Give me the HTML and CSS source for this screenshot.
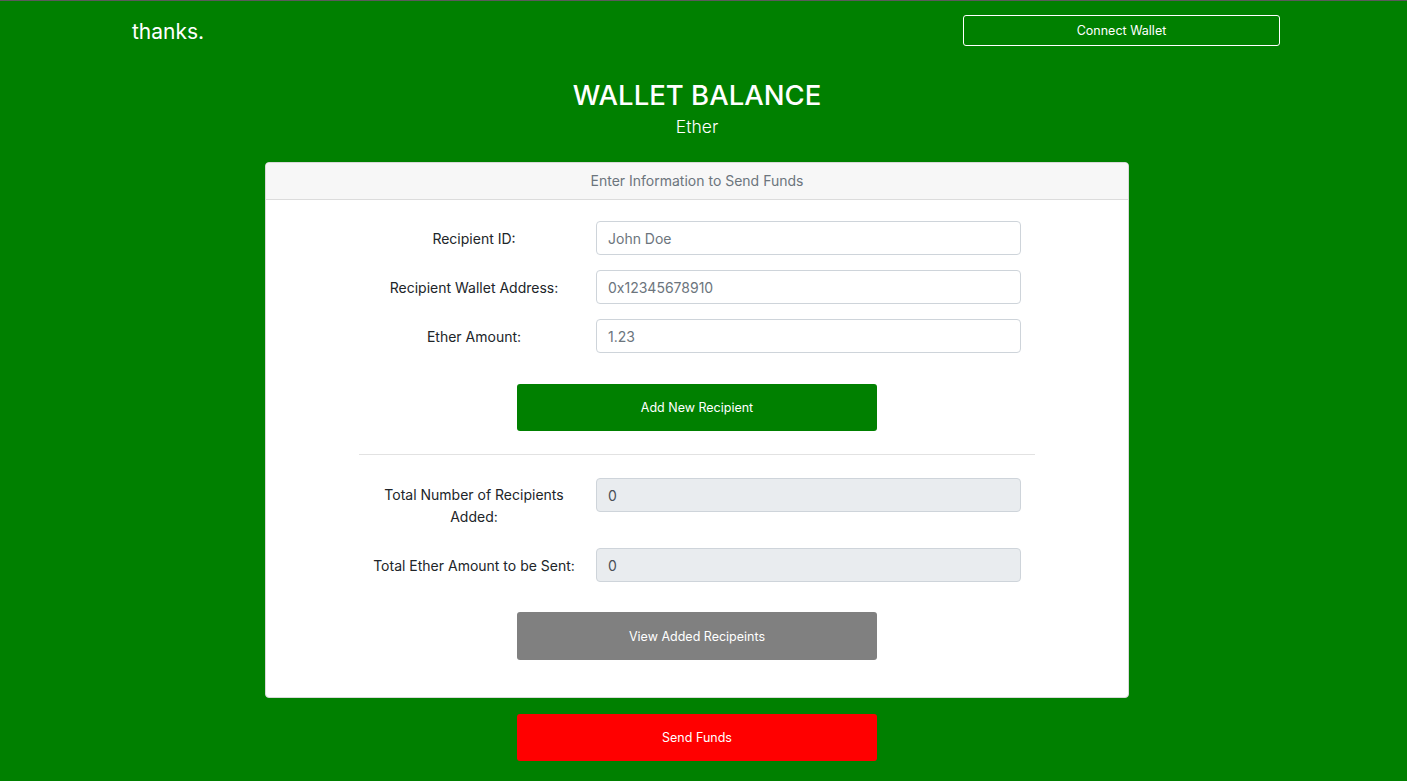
FILE: index.html
```html
<!DOCTYPE html>
<html>
<head>
<meta charset="utf-8">
<link rel="stylesheet" href="styles.css">
</head>
<body>
<div class="topline"></div>
<nav class="navbar">
  <span class="brand">thanks.</span>
  <button class="btn-outline">Connect Wallet</button>
</nav>
<main class="page">
  <header class="hero">
    <h1 class="title">WALLET BALANCE</h1>
    <p class="lead">Ether</p>
  </header>
  <section class="card">
    <div class="card-header">Enter Information to Send Funds</div>
    <div class="card-body">
      <div class="inner">
        <div class="row">
          <label class="label">Recipient ID:</label>
          <input class="field" placeholder="John Doe">
        </div>
        <div class="row">
          <label class="label">Recipient Wallet Address:</label>
          <input class="field" placeholder="0x12345678910">
        </div>
        <div class="row">
          <label class="label">Ether Amount:</label>
          <input class="field" placeholder="1.23">
        </div>
        <div class="btn-wrap first">
          <button class="btn btn-green">Add New Recipient</button>
        </div>
        <hr class="divider">
        <div class="row tall">
          <label class="label">Total Number of Recipients Added:</label>
          <input class="field readonly" value="0" readonly>
        </div>
        <div class="row">
          <label class="label">Total Ether Amount to be Sent:</label>
          <input class="field readonly" value="0" readonly>
        </div>
        <div class="btn-wrap second">
          <button class="btn btn-gray">View Added Recipeints</button>
        </div>
      </div>
    </div>
  </section>
  <div class="send-wrap">
    <button class="btn btn-red">Send Funds</button>
  </div>
</main>
</body>
</html>
```
FILE: styles.css
```css
* { box-sizing: border-box; }
html, body { margin: 0; padding: 0; }
body {
  background: #008000;
  font-family: Inter, "Liberation Sans", sans-serif;
  color: #212529;
  height: 781px;
  overflow: hidden;
}
.topline { height: 1px; background: #5a5a5a; }
.navbar {
  display: flex;
  justify-content: space-between;
  align-items: center;
  padding: 14px 127px 0 132px;
  height: 45px;
}
.brand {
  color: #fff;
  font-size: 21px;
  font-weight: 400;
  margin-top: 2px;
}
.btn-outline {
  width: 317px;
  height: 31px;
  background: transparent;
  border: 1px solid #fff;
  border-radius: 3px;
  color: #fff;
  font-family: inherit;
  font-size: 12.5px;
}
.page { width: 1394px; }
.hero { text-align: center; color: #fff; }
.title {
  margin: 32px 0 0;
  font-size: 27.5px;
  font-weight: 500;
  line-height: 34px;
}
.lead {
  margin: 3px 0 0;
  font-size: 17.5px;
  font-weight: 300;
  line-height: 24px;
}
.card {
  width: 864px;
  margin: 23px auto 0;
  background: #fff;
  border: 1px solid #d9d9d9;
  border-radius: 4px;
  overflow: hidden;
}
.card-header {
  height: 37px;
  background: #f7f7f7;
  border-bottom: 1px solid #dcdcdc;
  text-align: center;
  color: #6c757d;
  font-size: 14px;
  line-height: 36px;
}
.card-body { padding: 21px 0 37px; }
.inner { width: 676px; margin: 0 auto; }
.row {
  display: grid;
  grid-template-columns: 230px 425px;
  column-gap: 7px;
  align-items: start;
  margin-bottom: 15px;
}
.label {
  text-align: center;
  font-size: 14px;
  line-height: 22px;
  padding-top: 7px;
}
.row.tall { margin-bottom: 20px; }
.row.tall .label { padding: 6px 20px 0; }
.field {
  height: 34px;
  border: 1px solid #ced4da;
  border-radius: 4px;
  padding: 0 11px;
  font-family: inherit;
  font-size: 14px;
  color: #495057;
  background: #fff;
  width: 425px;
}
.field::placeholder { color: #6c757d; }
.field.readonly { background: #e9ecef; color: #495057; }
.btn-wrap { display: flex; justify-content: center; }
.btn-wrap.first { margin-top: 31px; }
.btn-wrap.second { margin-top: 30px; }
.btn {
  width: 360px;
  height: 47px;
  border: 0;
  border-radius: 3px;
  color: #fff;
  font-family: inherit;
  font-size: 12.5px;
}
.btn-green { background: #008000; }
.btn-gray { background: #808080; height: 48px; }
.btn-red { background: #ff0000; }
.divider {
  border: 0;
  border-top: 1px solid #e2e2e2;
  margin: 23px 0 23px;
}
.send-wrap { display: flex; justify-content: center; margin-top: 16px; }
```
